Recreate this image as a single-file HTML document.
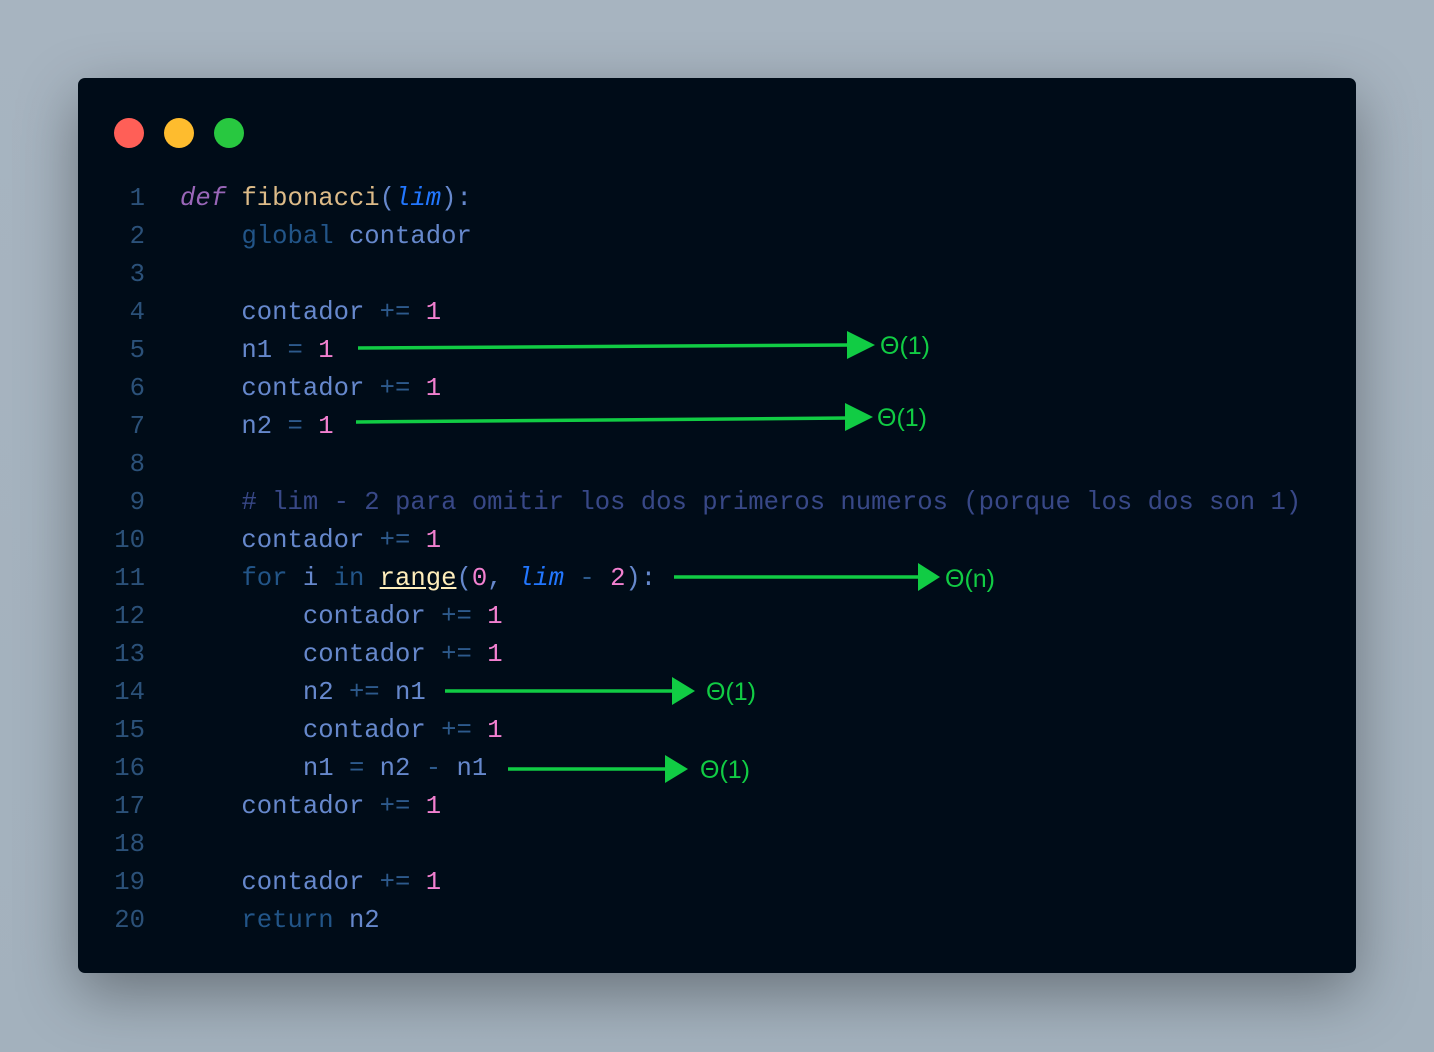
<!DOCTYPE html>
<html><head><meta charset="utf-8"><style>
html,body{margin:0;padding:0}
body{width:1434px;height:1052px;background:linear-gradient(180deg,#a7b4c0,#a3b1bd);position:relative;overflow:hidden}
.win{position:absolute;left:78px;top:78px;width:1278px;height:895px;background:#000c18;border-radius:7px;box-shadow:0 20px 60px rgba(0,0,0,.35)}
.dot{position:absolute;top:118px;width:30px;height:30px;border-radius:50%}
pre{position:absolute;margin:0;left:0;top:180px;font-family:"Liberation Mono",monospace;font-size:25.6px;line-height:38px;color:#6688cc;white-space:pre}
.ln{position:absolute;left:100px;width:45px;text-align:right;color:#2b5179}
.cd{position:absolute;left:180px}
.k{color:#9966b8;font-style:italic}.f{color:#ddbb88}.p{color:#2277ff;font-style:italic}
.g{color:#225588}.n{color:#f280d0}.c{color:#384887}.o{color:#2d5a8c}.u{color:#ffeebb;text-decoration:underline}
svg{position:absolute;left:0;top:0}
</style></head><body>
<div class="win"></div>
<div class="dot" style="left:114px;background:#ff5f57"></div>
<div class="dot" style="left:164px;background:#febc2e"></div>
<div class="dot" style="left:214px;background:#28c840"></div>
<pre class="ln">1
2
3
4
5
6
7
8
9
10
11
12
13
14
15
16
17
18
19
20</pre>
<pre class="cd"><span class="k">def</span> <span class="f">fibonacci</span>(<span class="p">lim</span>):
    <span class="g">global</span> contador

    contador <span class="o">+=</span> <span class="n">1</span>
    n1 <span class="o">=</span> <span class="n">1</span>
    contador <span class="o">+=</span> <span class="n">1</span>
    n2 <span class="o">=</span> <span class="n">1</span>

    <span class="c"># lim - 2 para omitir los dos primeros numeros (porque los dos son 1)</span>
    contador <span class="o">+=</span> <span class="n">1</span>
    <span class="g">for</span> i <span class="g">in</span> <span class="u">range</span>(<span class="n">0</span>, <span class="p">lim</span> <span class="o">-</span> <span class="n">2</span>):
        contador <span class="o">+=</span> <span class="n">1</span>
        contador <span class="o">+=</span> <span class="n">1</span>
        n2 <span class="o">+=</span> n1
        contador <span class="o">+=</span> <span class="n">1</span>
        n1 <span class="o">=</span> n2 <span class="o">-</span> n1
    contador <span class="o">+=</span> <span class="n">1</span>

    contador <span class="o">+=</span> <span class="n">1</span>
    <span class="g">return</span> n2</pre>
<svg width="1434" height="1052" font-family="Liberation Sans, sans-serif" font-size="25" fill="#11cc44">
<g stroke="#11cc44" stroke-width="3.5" fill="none">
<line x1="358" y1="348" x2="850" y2="345"/>
<line x1="356" y1="422" x2="848" y2="418"/>
<line x1="674" y1="577" x2="920" y2="577"/>
<line x1="445" y1="691" x2="674" y2="691"/>
<line x1="508" y1="769" x2="668" y2="769"/>
</g>
<polygon points="847,331 875,345 847,359"/>
<polygon points="845,403 873,417 845,431"/>
<polygon points="918,563 940,577 918,591"/>
<polygon points="672,677 695,691 672,705"/>
<polygon points="665,755 688,769 665,783"/>
<text x="880" y="354">Θ(1)</text>
<text x="877" y="426">Θ(1)</text>
<text x="945" y="587">Θ(n)</text>
<text x="706" y="700">Θ(1)</text>
<text x="700" y="778">Θ(1)</text>
</svg>
</body></html>
